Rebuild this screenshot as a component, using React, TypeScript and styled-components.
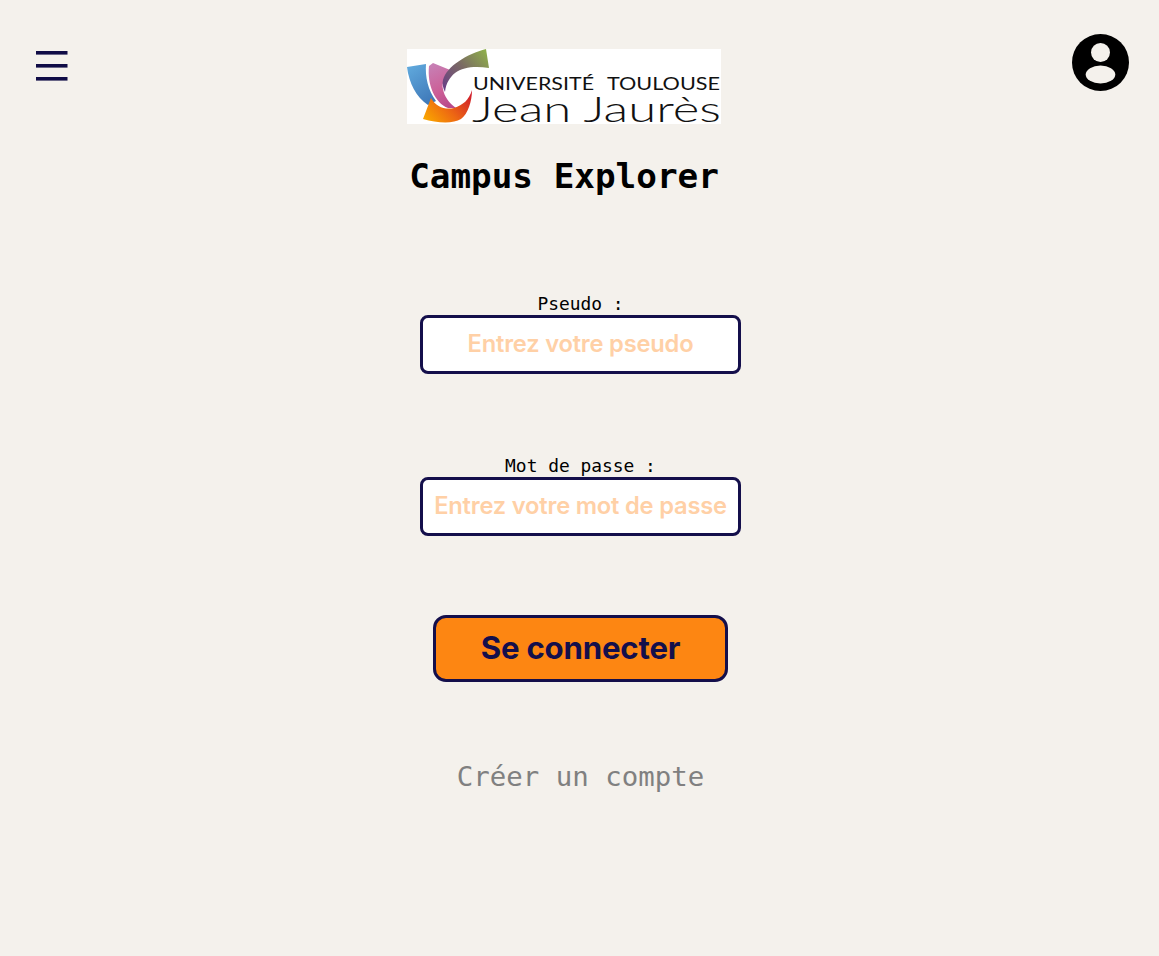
import React from "react";
import styled, { createGlobalStyle } from "styled-components";

const Global = createGlobalStyle`
  html, body { margin: 0; padding: 0; background: #f4f1ec; }
`;

const Page = styled.div`
  width: 1159px;
  height: 956px;
  background: #f4f1ec;
  overflow: hidden;
`;

const Header = styled.header`
  display: grid;
  grid-template-columns: 407px 314px 1fr;
  height: 198px;
`;

const MenuButton = styled.button`
  justify-self: start;
  align-self: start;
  margin: 50px 0 0 36px;
  padding: 0;
  width: 32px;
  height: 32px;
  border: 0;
  background: none;
  display: block;
  svg { display: block; }
`;

const Brand = styled.div`
  padding-top: 49px;
  display: flex;
  flex-direction: column;
  align-items: center;
`;

const LogoFrame = styled.svg`
  display: block;
  background: #fff;
  flex: none;
`;

const Title = styled.h1`
  margin: 30px -20px 0;
  font: 700 34.3px/44px "DejaVu Sans Mono", monospace;
  color: #000;
  white-space: nowrap;
`;

const AvatarLink = styled.a`
  justify-self: end;
  align-self: start;
  margin: 34px 30px 0 0;
  display: block;
  svg { display: block; }
`;

const Form = styled.form`
  display: flex;
  flex-direction: column;
  align-items: center;
  padding: 95px 0 0 2px;
`;

const Field = styled.div`
  display: flex;
  flex-direction: column;
  align-items: center;
  margin-bottom: 81px;
  &:nth-of-type(2) { margin-bottom: 79px; }
`;

const Label = styled.label`
  font: 400 17.9px/22px "DejaVu Sans Mono", monospace;
  color: #000;
  white-space: pre;
`;

const Input = styled.input`
  box-sizing: border-box;
  width: 321px;
  height: 59px;
  border: 3px solid #140f4b;
  border-radius: 8px;
  background: #fff;
  text-align: center;
  padding: 0 4px 2px;
  font: 600 23.7px "Inter", sans-serif;
  letter-spacing: -0.2px;
  outline: none;
  &::placeholder { color: #ffd0a6; opacity: 1; }
`;

const Submit = styled.button`
  box-sizing: border-box;
  width: 295px;
  height: 67px;
  border: 3px solid #140f4b;
  border-radius: 13px;
  background: #fd8612;
  color: #140f4b;
  font: 700 31.2px "Inter", sans-serif;
  letter-spacing: -0.2px;
  padding: 0 0 2px;
`;

const CreateLink = styled.a`
  margin-top: 77px;
  font: 400 27.4px/36px "DejaVu Sans Mono", monospace;
  color: #808080;
  text-decoration: none;
`;

const LogoText = styled.text<{ $size: number; $weight: number }>`
  font-family: "Lato", "Open Sans", sans-serif;
  font-weight: ${(p) => p.$weight};
  font-size: ${(p) => p.$size}px;
  fill: #111;
`;

function Logo() {
  return (
    <LogoFrame width={314} height={75} viewBox="0 0 314 75" role="img" aria-label="Université Toulouse Jean Jaurès">
      <defs>
        <linearGradient id="lgBlue" x1="0.2" y1="0" x2="0.7" y2="1">
          <stop offset="0" stopColor="#5fa8dc" />
          <stop offset="1" stopColor="#3f78b8" />
        </linearGradient>
        <linearGradient id="lgPink" x1="0.3" y1="0" x2="0.6" y2="1">
          <stop offset="0" stopColor="#c77fb4" />
          <stop offset="0.6" stopColor="#cc5f97" />
          <stop offset="1" stopColor="#b94a8c" />
        </linearGradient>
        <linearGradient id="lgGreen" x1="1" y1="0.1" x2="0" y2="0.9">
          <stop offset="0" stopColor="#8fb04a" />
          <stop offset="0.5" stopColor="#7a6a63" />
          <stop offset="1" stopColor="#6a3f86" />
        </linearGradient>
        <linearGradient id="lgFire" x1="0" y1="0.8" x2="1" y2="0.2">
          <stop offset="0" stopColor="#f9a400" />
          <stop offset="0.45" stopColor="#ee6a12" />
          <stop offset="1" stopColor="#d01f2c" />
        </linearGradient>
      </defs>
      <path d="M0 18 L19 15 C18 28 21 41 29 52 L21 56 C9 48 2 34 0 18Z" fill="url(#lgBlue)" />
      <path d="M22 17 L26 14 L48 23 C38 28 34 34 36 40 C37 47 42 54 49 59 L41 59 C28 54 20 36 22 17Z" fill="url(#lgPink)" />
      <path d="M36 31 C40 17 60 5 79 0 L82 19 C68 17 56 18 48 24 C43 28 39 34 38 43 C36 39 35 35 36 31Z" fill="url(#lgGreen)" />
      <path d="M24 49 L16 70 C30 74 46 75 54 70 C61 65 65 52 65 41 C62 51 56 56 47 59 C38 61 29 58 24 49Z" fill="url(#lgFire)" />
      <LogoText $size={16.5} $weight={400} x={66} y={41} textLength={121} lengthAdjust="spacingAndGlyphs">UNIVERSITÉ</LogoText>
      <LogoText $size={16.5} $weight={400} x={200} y={41} textLength={113} lengthAdjust="spacingAndGlyphs">TOULOUSE</LogoText>
      <LogoText $size={35} $weight={300} x={65} y={73} textLength={249} lengthAdjust="spacingAndGlyphs">Jean Jaurès</LogoText>
    </LogoFrame>
  );
}

export default function App() {
  return (
    <Page>
      <Global />
      <Header>
        <MenuButton type="button" aria-label="Menu">
          <svg width="32" height="32" viewBox="0 0 32 32" fill="#100c46">
            <rect x="0" y="1" width="31.5" height="3.6" />
            <rect x="0" y="14" width="31.5" height="3.6" />
            <rect x="0" y="27" width="31.5" height="3.6" />
          </svg>
        </MenuButton>
        <Brand>
          <Logo />
          <Title>Campus Explorer</Title>
        </Brand>
        <AvatarLink aria-label="Profil">
          <svg width="57" height="57" viewBox="0 0 57 57">
            <circle cx="28.5" cy="28.5" r="28.5" fill="#000" />
            <circle cx="28.5" cy="18.5" r="9.5" fill="#f4f1ec" />
            <ellipse cx="28.5" cy="40.5" rx="14.8" ry="9" fill="#f4f1ec" />
          </svg>
        </AvatarLink>
      </Header>
      <Form>
        <Field>
          <Label htmlFor="pseudo">Pseudo :</Label>
          <Input id="pseudo" type="text" placeholder="Entrez votre pseudo" />
        </Field>
        <Field>
          <Label htmlFor="pass">Mot de passe :</Label>
          <Input id="pass" type="password" placeholder="Entrez votre mot de passe" />
        </Field>
        <Submit type="button">Se connecter</Submit>
        <CreateLink>Créer un compte</CreateLink>
      </Form>
    </Page>
  );
}
